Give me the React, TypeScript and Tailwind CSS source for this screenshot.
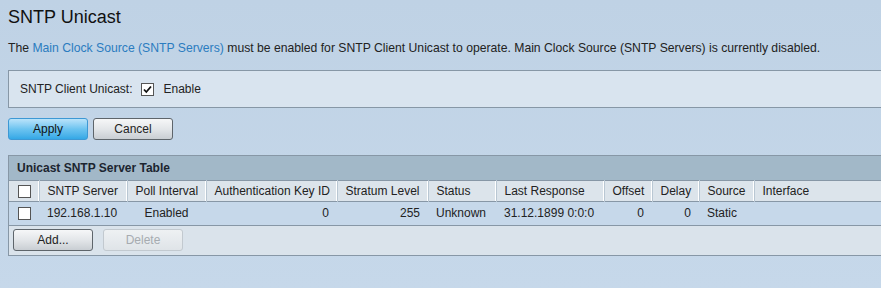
import React from "react";

const font = { fontFamily: '"Liberation Sans", Arial, sans-serif' };

function Box({ checked = false }: { checked?: boolean }) {
  return (
    <span className="inline-flex h-[13px] w-[13px] items-center justify-center border border-[#555] bg-white">
      {checked && (
        <svg viewBox="0 0 11 11" className="h-[11px] w-[11px]">
          <path d="M2 5.5 L4.3 8 L9 2.5" fill="none" stroke="#111" strokeWidth="1.8" />
        </svg>
      )}
    </span>
  );
}

function Btn({
  children,
  variant = "gray",
}: {
  children: React.ReactNode;
  variant?: "blue" | "gray" | "disabled";
}) {
  const cls =
    variant === "blue"
      ? "border-[#3d98d4] bg-gradient-to-b from-[#b9e3fa] via-[#6cc4f0] to-[#33a8e6] text-[#111]"
      : variant === "disabled"
        ? "border-[#c2c9cf] bg-gradient-to-b from-[#eef1f3] to-[#dfe4e8] text-[#a6abb0]"
        : "border-[#5e656b] bg-gradient-to-b from-[#f6f7f8] via-[#e3e6e9] to-[#c9ced3] text-[#222]";
  return (
    <button
      className={`flex h-[22px] w-[80px] items-center justify-center rounded-[3px] border text-[12px] ${cls}`}
    >
      {children}
    </button>
  );
}

const cols = [
  { label: "", w: 30 },
  { label: "SNTP Server", w: 88 },
  { label: "Poll Interval", w: 79 },
  { label: "Authentication Key ID", w: 131 },
  { label: "Stratum Level", w: 91 },
  { label: "Status", w: 68 },
  { label: "Last Response", w: 108 },
  { label: "Offset", w: 48 },
  { label: "Delay", w: 47 },
  { label: "Source", w: 55 },
  { label: "Interface", w: 128 },
];

const row: { v: string; align: string }[] = [
  { v: "192.168.1.10", align: "text-left" },
  { v: "Enabled", align: "text-center" },
  { v: "0", align: "text-right" },
  { v: "255", align: "text-right" },
  { v: "Unknown", align: "text-left" },
  { v: "31.12.1899 0:0:0", align: "text-left" },
  { v: "0", align: "text-right" },
  { v: "0", align: "text-right" },
  { v: "Static", align: "text-left" },
  { v: "", align: "text-left" },
];

export default function App() {
  return (
    <div
      style={font}
      className="h-[288px] w-[881px] overflow-hidden bg-gradient-to-b from-[#bfd2e5] to-[#c6d8ea] text-[12px] text-[#222]"
    >
      <h1 className="pl-2 pt-[6px] text-[18px] leading-[22px] text-[#111]">SNTP Unicast</h1>
      <p className="mt-[13px] whitespace-nowrap pl-2 text-[12.2px] leading-[14px] text-[#222]">
        The <span className="text-[#2b7cc0]">Main Clock Source (SNTP Servers)</span> must be
        enabled for SNTP Client Unicast to operate. Main Clock Source (SNTP Servers) is currently
        disabled.
      </p>

      <div className="ml-2 mt-[15px] flex h-[38px] items-center border border-r-0 border-[#8797a6] bg-[#d9e4ef] pl-[11px]">
        <span>SNTP Client Unicast:</span>
        <span className="ml-[9px] flex">
          <Box checked />
        </span>
        <span className="ml-[9px]">Enable</span>
      </div>

      <div className="ml-2 mt-[10px] flex gap-[5px]">
        <Btn variant="blue">Apply</Btn>
        <Btn>Cancel</Btn>
      </div>

      <div className="ml-2 mt-[15px] border border-r-0 border-[#8797a6]">
        <div className="flex h-[24px] items-center bg-[#a2b8c8] pl-[8px] font-bold text-[#1c2530]">
          Unicast SNTP Server Table
        </div>
        <table className="w-full table-fixed border-collapse whitespace-nowrap">
          <colgroup>
            {cols.map((c, i) => (
              <col key={i} style={{ width: c.w }} />
            ))}
          </colgroup>
          <thead>
            <tr className="h-[21px] border-t border-[#8797a6] bg-[#dce4eb]">
              {cols.map((c, i) => (
                <th
                  key={i}
                  className={`overflow-visible px-[8px] text-left font-normal ${
                    i < cols.length - 1 ? "border-r border-r-[#b9c7d3] shadow-[inset_-1px_0_0_#ffffff]" : ""
                  }`}
                >
                  {i === 0 ? (
                    <span className="flex pl-[1px]">
                      <Box />
                    </span>
                  ) : (
                    c.label
                  )}
                </th>
              ))}
            </tr>
          </thead>
          <tbody>
            <tr className="h-[23px] border-t border-[#8797a6] bg-[#c6d8ea]">
              <td className="px-[8px]">
                <span className="flex pl-[1px]">
                  <Box />
                </span>
              </td>
              {row.map((r, i) => (
                <td key={i} className={`px-[8px] ${r.align}`}>
                  {r.v}
                </td>
              ))}
            </tr>
          </tbody>
        </table>
        <div className="flex h-[30px] items-center gap-[10px] border-t border-[#8797a6] bg-[#dae3eb] pl-[4px]">
          <Btn>Add...</Btn>
          <Btn variant="disabled">Delete</Btn>
        </div>
      </div>
    </div>
  );
}
